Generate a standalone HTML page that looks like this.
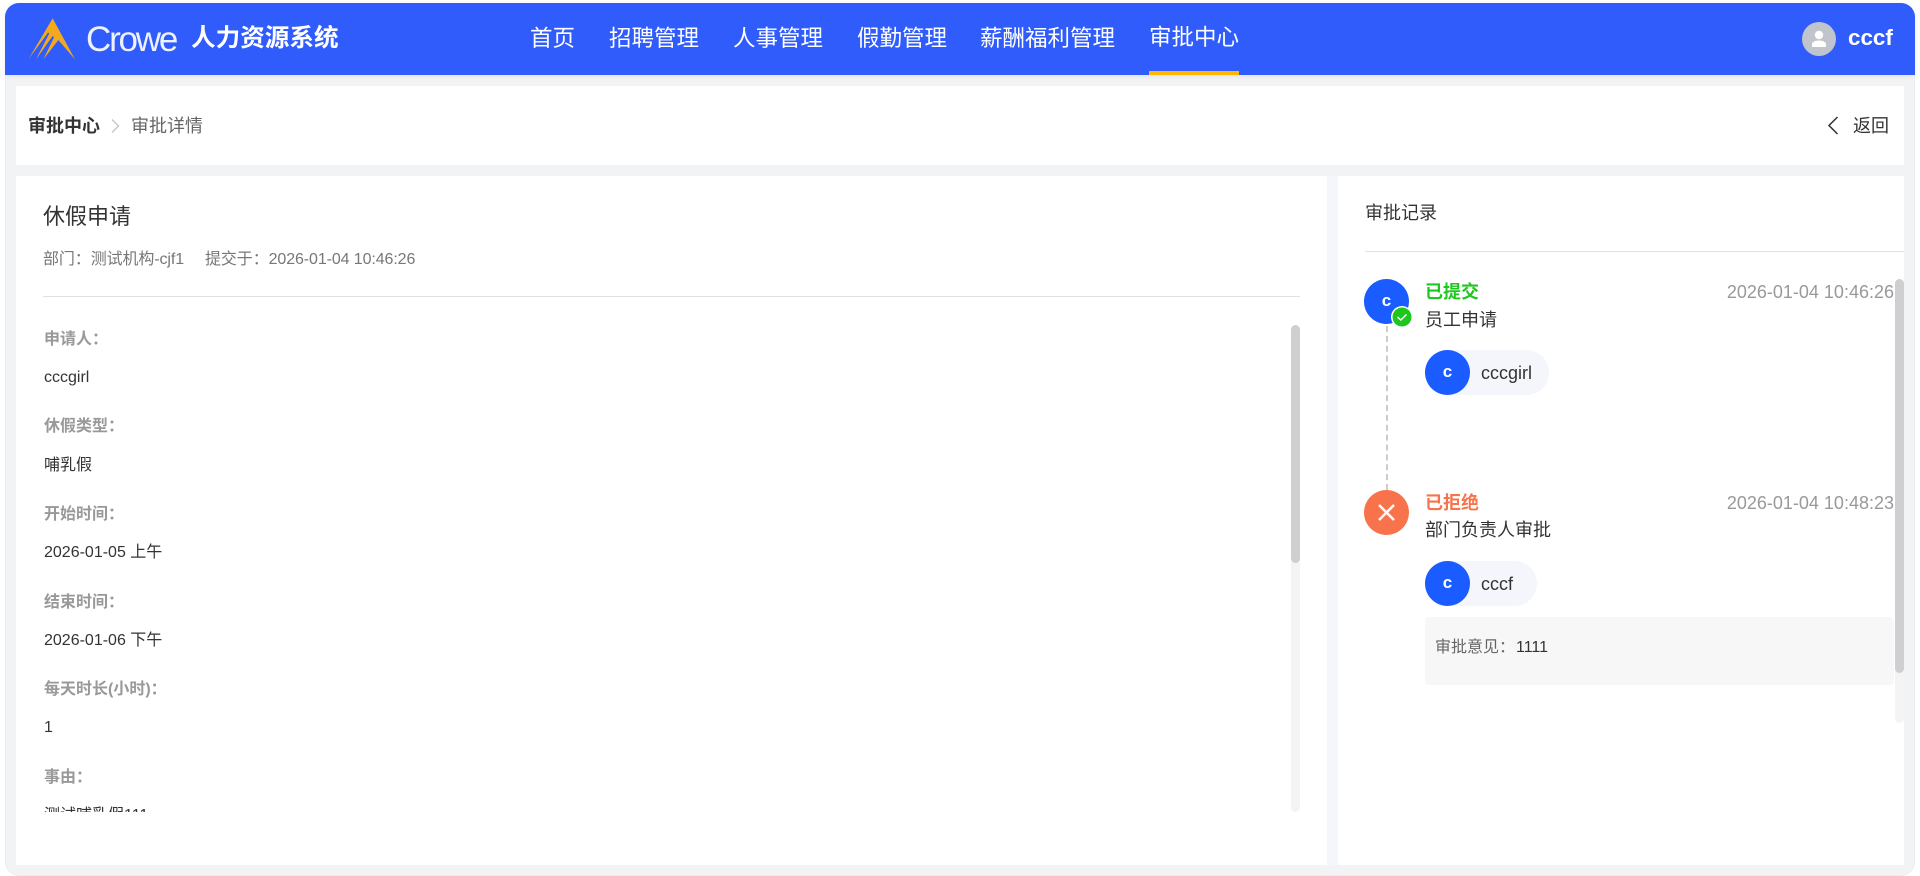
<!DOCTYPE html>
<html lang="zh-CN"><head><meta charset="utf-8"><title>审批详情</title>
<style>
*{box-sizing:border-box}
html,body{margin:0;padding:0;width:1920px;height:876px;overflow:hidden;background:#fff}
body{font-family:"Liberation Sans","Noto Sans CJK SC",sans-serif;color:#333;position:relative}
.a{position:absolute;white-space:nowrap}
#frame{left:5px;top:3px;width:1910px;height:873px;background:#f2f3f5;border-radius:14px;border:1px solid #ececee;border-top:0;overflow:hidden}
#hd{left:5px;top:3px;width:1910px;height:72px;background:#2f5cfb;border-radius:14px 14px 0 0;box-shadow:0 1px 6px rgba(0,0,0,.08)}
.nav{top:22px;font-size:22.5px;line-height:33px;color:#fff}
.card{background:#fff}
.lab{left:44px;font-size:16px;line-height:22px;font-weight:700;color:#999}
.val{left:44px;font-size:16px;line-height:22px;color:#333}
.ava{width:45px;height:45px;border-radius:50%;background:#1a5cff;color:#fff;font-weight:700;font-size:17px;line-height:44px;text-align:center}
.st{font-size:18px;line-height:26px;font-weight:700}
.tm{font-size:18px;line-height:26px;color:#999;right:26px}
.nm{font-size:18px;line-height:26px;color:#333;left:1425px}
.chip{left:1425px;height:45px;border-radius:23px;background:#f4f6fc}
.cn{left:1481px;font-size:18px;line-height:26px;color:#333}
</style></head><body>
<div class="a" id="frame"></div>
<div class="a" id="hd"></div>
<svg class="a" style="left:20px;top:10px" width="70" height="60" viewBox="0 0 210 180"><path fill="#f4a91c" d="M98 25 L165 148 L115 90 L70 148 L102 82 L98 78 L48 148 L88 70 L84 68 L25 148 Z"/></svg>
<div class="a" style="left:86px;top:17px;font-size:35px;line-height:46px;color:#fff;letter-spacing:-2.2px;font-weight:400;opacity:.92">Crowe</div>
<div class="a" style="left:191px;top:21px;font-size:24.6px;line-height:36px;font-weight:700;color:#fff">人力资源系统</div>
<div class="a nav" style="left:530px">首页</div>
<div class="a nav" style="left:609px">招聘管理</div>
<div class="a nav" style="left:733px">人事管理</div>
<div class="a nav" style="left:857px">假勤管理</div>
<div class="a nav" style="left:980px">薪酬福利管理</div>
<div class="a nav" style="left:1149px;top:21px">审批中心</div>
<div class="a" style="left:1149px;top:71px;width:90px;height:4px;background:#ffb800"></div>
<div class="a" style="left:1802px;top:22px;width:34px;height:34px;border-radius:50%;background:#c0c4cc"></div>
<svg class="a" style="left:1802px;top:22px" width="34" height="34" viewBox="0 0 34 34"><circle cx="17" cy="13" r="4.2" fill="#fff"/><path fill="#fff" d="M10 25v-2.5c0-2.5 3-4 7-4s7 1.500 7 4V25z"/></svg>
<div class="a" style="left:1848px;top:22px;font-size:22.4px;line-height:32px;font-weight:700;color:#fff">cccf</div>

<div class="a card" style="left:16px;top:86px;width:1888px;height:79px"></div>
<div class="a" style="left:28px;top:113px;font-size:18px;line-height:26px;font-weight:700;color:#333">审批中心</div>
<svg class="a" style="left:109px;top:118px" width="12" height="16" viewBox="0 0 12 16"><path d="M3 1.500 L9.500 8 L3 14.500" fill="none" stroke="#c0c4cc" stroke-width="1.300"/></svg>
<div class="a" style="left:131px;top:113px;font-size:18px;line-height:26px;color:#666">审批详情</div>
<svg class="a" style="left:1826px;top:115px" width="14" height="21" viewBox="0 0 14 21"><path d="M11.500 2 L3 10.500 L11.500 19" fill="none" stroke="#333" stroke-width="1.500"/></svg>
<div class="a" style="left:1853px;top:113px;font-size:18px;line-height:26px;color:#333">返回</div>

<div class="a card" style="left:16px;top:176px;width:1311px;height:689px"></div>
<div class="a" style="left:1327px;top:176px;width:11px;height:689px;background:#f5f6fb"></div>
<div class="a card" style="left:1338px;top:176px;width:566px;height:689px"></div>

<div class="a" style="left:43px;top:201px;font-size:22px;line-height:32px;color:#333">休假申请</div>
<div class="a" style="left:43px;top:248px;font-size:16px;line-height:24px;color:#777;letter-spacing:-.1px">部门：测试机构-cjf1</div>
<div class="a" style="left:205px;top:248px;font-size:16px;line-height:24px;color:#777;letter-spacing:-.1px">提交于：2026-01-04 10:46:26</div>
<div class="a" style="left:43px;top:296px;width:1257px;height:1px;background:#e0e0e6"></div>

<div class="a" style="left:16px;top:325px;width:1311px;height:487px;overflow:hidden">
<div style="position:absolute;left:-16px;top:-325px;width:1300px;height:900px">
<div class="a lab" style="top:329px">申请人：</div><div class="a val" style="top:367px">cccgirl</div>
<div class="a lab" style="top:416px">休假类型：</div><div class="a val" style="top:455px">哺乳假</div>
<div class="a lab" style="top:504px">开始时间：</div><div class="a val" style="top:542px">2026-01-05 上午</div>
<div class="a lab" style="top:592px">结束时间：</div><div class="a val" style="top:630px">2026-01-06 下午</div>
<div class="a lab" style="top:679px">每天时长(小时)：</div><div class="a val" style="top:717px">1</div>
<div class="a lab" style="top:767px">事由：</div><div class="a val" style="top:805px">测试哺乳假111</div>
</div></div>
<div class="a" style="left:1291px;top:325px;width:9px;height:487px;background:#f4f4f5;border-radius:5px"></div>
<div class="a" style="left:1291px;top:325px;width:9px;height:238px;background:#cfcfd1;border-radius:5px"></div>

<div class="a" style="left:1365px;top:200px;font-size:18px;line-height:26px;color:#333">审批记录</div>
<div class="a" style="left:1365px;top:251px;width:539px;height:1px;background:#e0e0e6"></div>

<div class="a" style="left:1386px;top:326px;height:164px;width:0;border-left:2px dashed #ccc"></div>
<div class="a ava" style="left:1364px;top:279px">c</div>
<svg class="a" style="left:1391px;top:306px" width="22" height="22" viewBox="0 0 22 22"><circle cx="11" cy="11" r="11" fill="#fff"/><circle cx="11" cy="11" r="9.500" fill="#1ec71e"/><path d="M6.500 11 L9.800 14 L15.500 8.500" fill="none" stroke="#fff" stroke-width="1.500"/></svg>
<div class="a st" style="left:1425px;top:279px;color:#1ec71e">已提交</div>
<div class="a tm" style="top:279px">2026-01-04 10:46:26</div>
<div class="a nm" style="top:307px">员工申请</div>
<div class="a chip" style="top:350px;width:124px"></div>
<div class="a ava" style="left:1425px;top:350px">c</div>
<div class="a cn" style="top:360px">cccgirl</div>

<div class="a ava" style="left:1364px;top:490px;background:#f8734c"></div>
<svg class="a" style="left:1364px;top:490px" width="45" height="45" viewBox="0 0 45 45"><path d="M15 15 L30 30 M30 15 L15 30" stroke="#fff" stroke-width="2.500" fill="none"/></svg>
<div class="a st" style="left:1425px;top:490px;color:#f8734c">已拒绝</div>
<div class="a tm" style="top:490px">2026-01-04 10:48:23</div>
<div class="a nm" style="top:517px">部门负责人审批</div>
<div class="a chip" style="top:561px;width:112px"></div>
<div class="a ava" style="left:1425px;top:561px">c</div>
<div class="a cn" style="top:571px">cccf</div>
<div class="a" style="left:1425px;top:617px;width:469px;height:68px;background:#f7f7f7;border-radius:4px"></div>
<div class="a" style="left:1435px;top:636px;font-size:16px;line-height:24px;color:#666">审批意见：</div>
<div class="a" style="left:1516px;top:636px;font-size:16px;line-height:24px;color:#333">1111</div>

<div class="a" style="left:1895px;top:279px;width:9px;height:444px;background:#f4f4f5;border-radius:5px"></div>
<div class="a" style="left:1895px;top:279px;width:9px;height:394px;background:#cfcfd1;border-radius:5px"></div>
</body></html>
